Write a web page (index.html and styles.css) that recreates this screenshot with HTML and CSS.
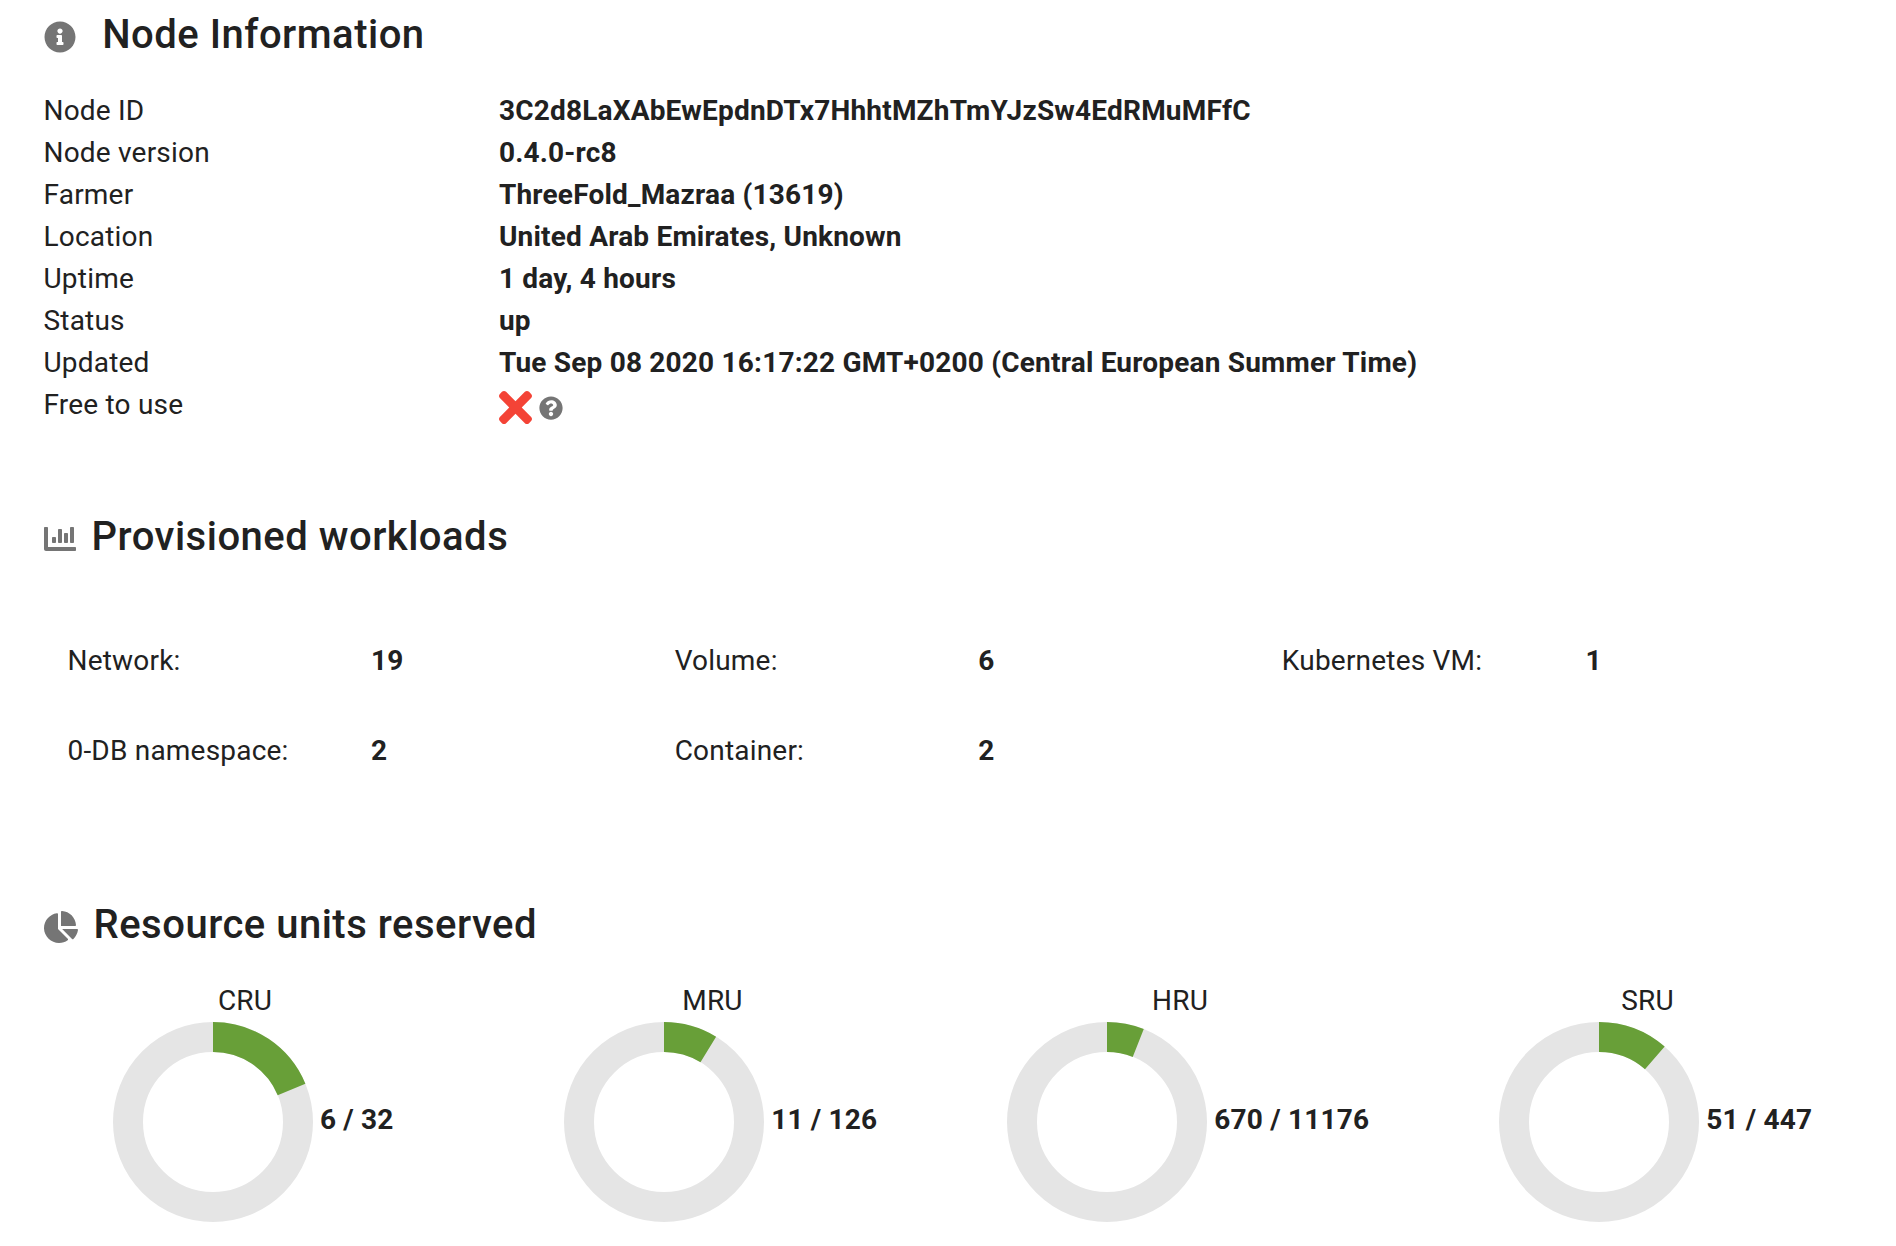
FILE: index.html
```html
<!DOCTYPE html>
<html lang="en">
<head>
<meta charset="utf-8">
<title>Node Information</title>
<link rel="stylesheet" href="styles.css">
</head>
<body>
<main class="page">
  <section class="info">
    <h2 class="title title-wide">
      <svg class="icon" viewBox="0 0 512 512"><path d="M256 8C119.043 8 8 119.083 8 256c0 136.997 111.043 248 248 248s248-111.003 248-248C504 119.083 392.957 8 256 8zm0 110c23.196 0 42 18.804 42 42s-18.804 42-42 42-42-18.804-42-42 18.804-42 42-42zm56 254c0 6.627-5.373 12-12 12h-88c-6.627 0-12-5.373-12-12v-24c0-6.627 5.373-12 12-12h12v-64h-12c-6.627 0-12-5.373-12-12v-24c0-6.627 5.373-12 12-12h64c6.627 0 12 5.373 12 12v100h12c6.627 0 12 5.373 12 12v24z"/></svg>
      <span>Node Information</span>
    </h2>
    <dl class="details">
      <dt>Node ID</dt><dd>3C2d8LaXAbEwEpdnDTx7HhhtMZhTmYJzSw4EdRMuMFfC</dd>
      <dt>Node version</dt><dd>0.4.0-rc8</dd>
      <dt>Farmer</dt><dd>ThreeFold_Mazraa (13619)</dd>
      <dt>Location</dt><dd>United Arab Emirates, Unknown</dd>
      <dt>Uptime</dt><dd>1 day, 4 hours</dd>
      <dt>Status</dt><dd>up</dd>
      <dt>Updated</dt><dd>Tue Sep 08 2020 16:17:22 GMT+0200 (Central European Summer Time)</dd>
      <dt>Free to use</dt>
      <dd class="free">
        <svg class="cross" viewBox="0 80 352 352"><path d="M242.72 256l100.07-100.07c12.28-12.28 12.28-32.19 0-44.48l-22.24-22.24c-12.28-12.28-32.19-12.28-44.48 0L176 189.28 75.93 89.21c-12.28-12.28-32.19-12.28-44.48 0L9.21 111.45c-12.28 12.28-12.28 32.19 0 44.48L109.28 256 9.21 356.07c-12.28 12.28-12.28 32.19 0 44.48l22.24 22.24c12.28 12.28 32.2 12.28 44.48 0L176 322.72l100.07 100.07c12.28 12.28 32.2 12.28 44.48 0l22.24-22.24c12.28-12.28 12.28-32.19 0-44.48L242.72 256z"/></svg>
        <svg class="help" viewBox="0 0 512 512"><path d="M504 256c0 136.997-111.043 248-248 248S8 392.997 8 256C8 119.083 119.043 8 256 8s248 111.083 248 248zM262.655 90c-54.497 0-89.255 22.957-116.549 63.758-3.536 5.286-2.353 12.415 2.715 16.258l34.699 26.31c5.205 3.947 12.621 3.008 16.665-2.122 17.864-22.658 30.113-35.797 57.303-35.797 20.429 0 45.698 13.148 45.698 32.958 0 14.976-12.363 22.667-32.534 33.976C247.128 238.528 216 254.941 216 296v4c0 6.627 5.373 12 12 12h56c6.627 0 12-5.373 12-12v-1.333c0-28.462 83.186-29.647 83.186-106.667 0-58.002-60.165-102-116.531-102zM256 338c-25.365 0-46 20.635-46 46 0 25.364 20.635 46 46 46s46-20.636 46-46c0-25.365-20.635-46-46-46z"/></svg>
      </dd>
    </dl>
  </section>

  <section class="workloads">
    <h2 class="title">
      <svg class="icon" viewBox="0 0 512 512"><path d="M332.8 320h38.4c6.4 0 12.8-6.4 12.8-12.8V172.8c0-6.4-6.4-12.8-12.8-12.8h-38.4c-6.4 0-12.8 6.4-12.8 12.8v134.4c0 6.4 6.4 12.8 12.8 12.8zm96 0h38.4c6.4 0 12.8-6.4 12.8-12.8V76.8c0-6.4-6.4-12.8-12.8-12.8h-38.4c-6.4 0-12.8 6.4-12.8 12.8v230.4c0 6.4 6.4 12.8 12.8 12.8zm-288 0h38.4c6.4 0 12.8-6.4 12.8-12.8v-70.4c0-6.4-6.4-12.8-12.8-12.8h-38.4c-6.4 0-12.8 6.4-12.8 12.8v70.4c0 6.4 6.4 12.8 12.8 12.8zm96 0h38.4c6.4 0 12.8-6.4 12.8-12.8V108.8c0-6.4-6.4-12.8-12.8-12.8h-38.4c-6.4 0-12.8 6.4-12.8 12.8v198.4c0 6.4 6.4 12.8 12.8 12.8zM496 384H64V80c0-8.84-7.16-16-16-16H16C7.16 64 0 71.16 0 80v336c0 17.67 14.33 32 32 32h464c8.84 0 16-7.16 16-16v-32c0-8.84-7.16-16-16-16z"/></svg>
      <span>Provisioned workloads</span>
    </h2>
    <dl class="counts">
      <dt>Network:</dt><dd>19</dd>
      <dt>Volume:</dt><dd>6</dd>
      <dt>Kubernetes VM:</dt><dd>1</dd>
      <dt>0-DB namespace:</dt><dd>2</dd>
      <dt>Container:</dt><dd>2</dd>
    </dl>
  </section>

  <section class="resources">
    <h2 class="title">
      <svg class="icon icon-pie" viewBox="0 0 544 512"><path d="M527.79 288H290.5l158.03 158.03c6.04 6.04 15.98 6.53 22.19.68 38.7-36.46 65.32-85.61 73.13-140.86 1.34-9.46-6.51-17.85-16.06-17.85zm-15.83-64.8C503.72 103.74 408.26 8.28 288.8.04 279.68-.59 272 7.1 272 16.24V240h223.77c9.14 0 16.82-7.68 16.19-16.8zM224 288V50.71c0-9.55-8.39-17.4-17.84-16.06C86.99 51.49-4.1 155.6.14 280.37 4.5 408.51 114.83 513.59 243.03 511.98c50.4-.63 96.97-16.87 135.26-44.03 7.9-5.6 8.42-17.23 1.57-24.08L224 288z"/></svg>
      <span>Resource units reserved</span>
    </h2>
    <div class="charts">
      <div class="unit">
        <div class="unit-name">CRU</div>
        <div class="gauge">
          <svg class="donut" viewBox="0 0 200 200"><circle class="track" cx="100" cy="100" r="85"/><circle class="used" cx="100" cy="100" r="85" pathLength="32" stroke-dasharray="6 32" transform="rotate(-90 100 100)"/></svg>
          <span class="amount">6 / 32</span>
        </div>
      </div>
      <div class="unit">
        <div class="unit-name">MRU</div>
        <div class="gauge">
          <svg class="donut" viewBox="0 0 200 200"><circle class="track" cx="100" cy="100" r="85"/><circle class="used" cx="100" cy="100" r="85" pathLength="126" stroke-dasharray="11 126" transform="rotate(-90 100 100)"/></svg>
          <span class="amount">11 / 126</span>
        </div>
      </div>
      <div class="unit">
        <div class="unit-name">HRU</div>
        <div class="gauge">
          <svg class="donut" viewBox="0 0 200 200"><circle class="track" cx="100" cy="100" r="85"/><circle class="used" cx="100" cy="100" r="85" pathLength="11176" stroke-dasharray="670 11176" transform="rotate(-90 100 100)"/></svg>
          <span class="amount">670 / 11176</span>
        </div>
      </div>
      <div class="unit">
        <div class="unit-name">SRU</div>
        <div class="gauge">
          <svg class="donut" viewBox="0 0 200 200"><circle class="track" cx="100" cy="100" r="85"/><circle class="used" cx="100" cy="100" r="85" pathLength="447" stroke-dasharray="51 447" transform="rotate(-90 100 100)"/></svg>
          <span class="amount">51 / 447</span>
        </div>
      </div>
    </div>
  </section>
</main>
</body>
</html>
```
FILE: styles.css
```css
* { box-sizing: border-box; }

body {
  margin: 0;
  background: #fff;
  color: #212121;
  font: 400 28px/42px Roboto, sans-serif;
  letter-spacing: 0.2px;
}

.page {
  padding: 3px 31px 0 43.5px;
}

.title {
  display: flex;
  align-items: center;
  gap: 16px;
  height: 64px;
  margin: 0;
  font-size: 40px;
  line-height: 64px;
  font-weight: 500;
  letter-spacing: 0.5px;
}

.title-wide { gap: 26.7px; }

.icon {
  width: 32px;
  height: 32px;
  margin-top: 3px;
  fill: #757575;
}

.icon-pie { width: 34px; }

dl, dd { margin: 0; }
dd { font-weight: 700; }

.details {
  display: grid;
  grid-template-columns: 1fr 3fr;
  grid-auto-rows: 42px;
  margin-top: 23px;
}

.free {
  display: flex;
  align-items: center;
  gap: 7px;
  padding-top: 6px;
}

.cross {
  width: 33px;
  height: 33px;
  margin-top: -1px;
  fill: #f44336;
}

.help {
  width: 24px;
  height: 24px;
  fill: #757575;
}

.workloads { margin-top: 79px; }

.counts {
  display: grid;
  grid-template-columns: repeat(6, 1fr);
  grid-auto-rows: 90px;
  margin-top: 47px;
}

.counts dt,
.counts dd { padding: 24px; }

.counts dt { white-space: nowrap; }

.resources { margin-top: 97px; }

.charts {
  display: grid;
  grid-template-columns: repeat(4, 1fr);
  margin: 23px -17px 0 -31.5px;
}

.unit-name {
  padding-right: 1.5px;
  text-align: center;
}

.gauge {
  display: flex;
  justify-content: center;
  align-items: center;
  gap: 7px;
  padding-left: 15px;
}

.donut {
  width: 200px;
  height: 200px;
  fill: none;
  stroke-width: 30;
}

.track { stroke: #e5e5e5; }
.used { stroke: #689f38; }

.amount {
  margin-top: -5px;
  font-weight: 700;
}
```
